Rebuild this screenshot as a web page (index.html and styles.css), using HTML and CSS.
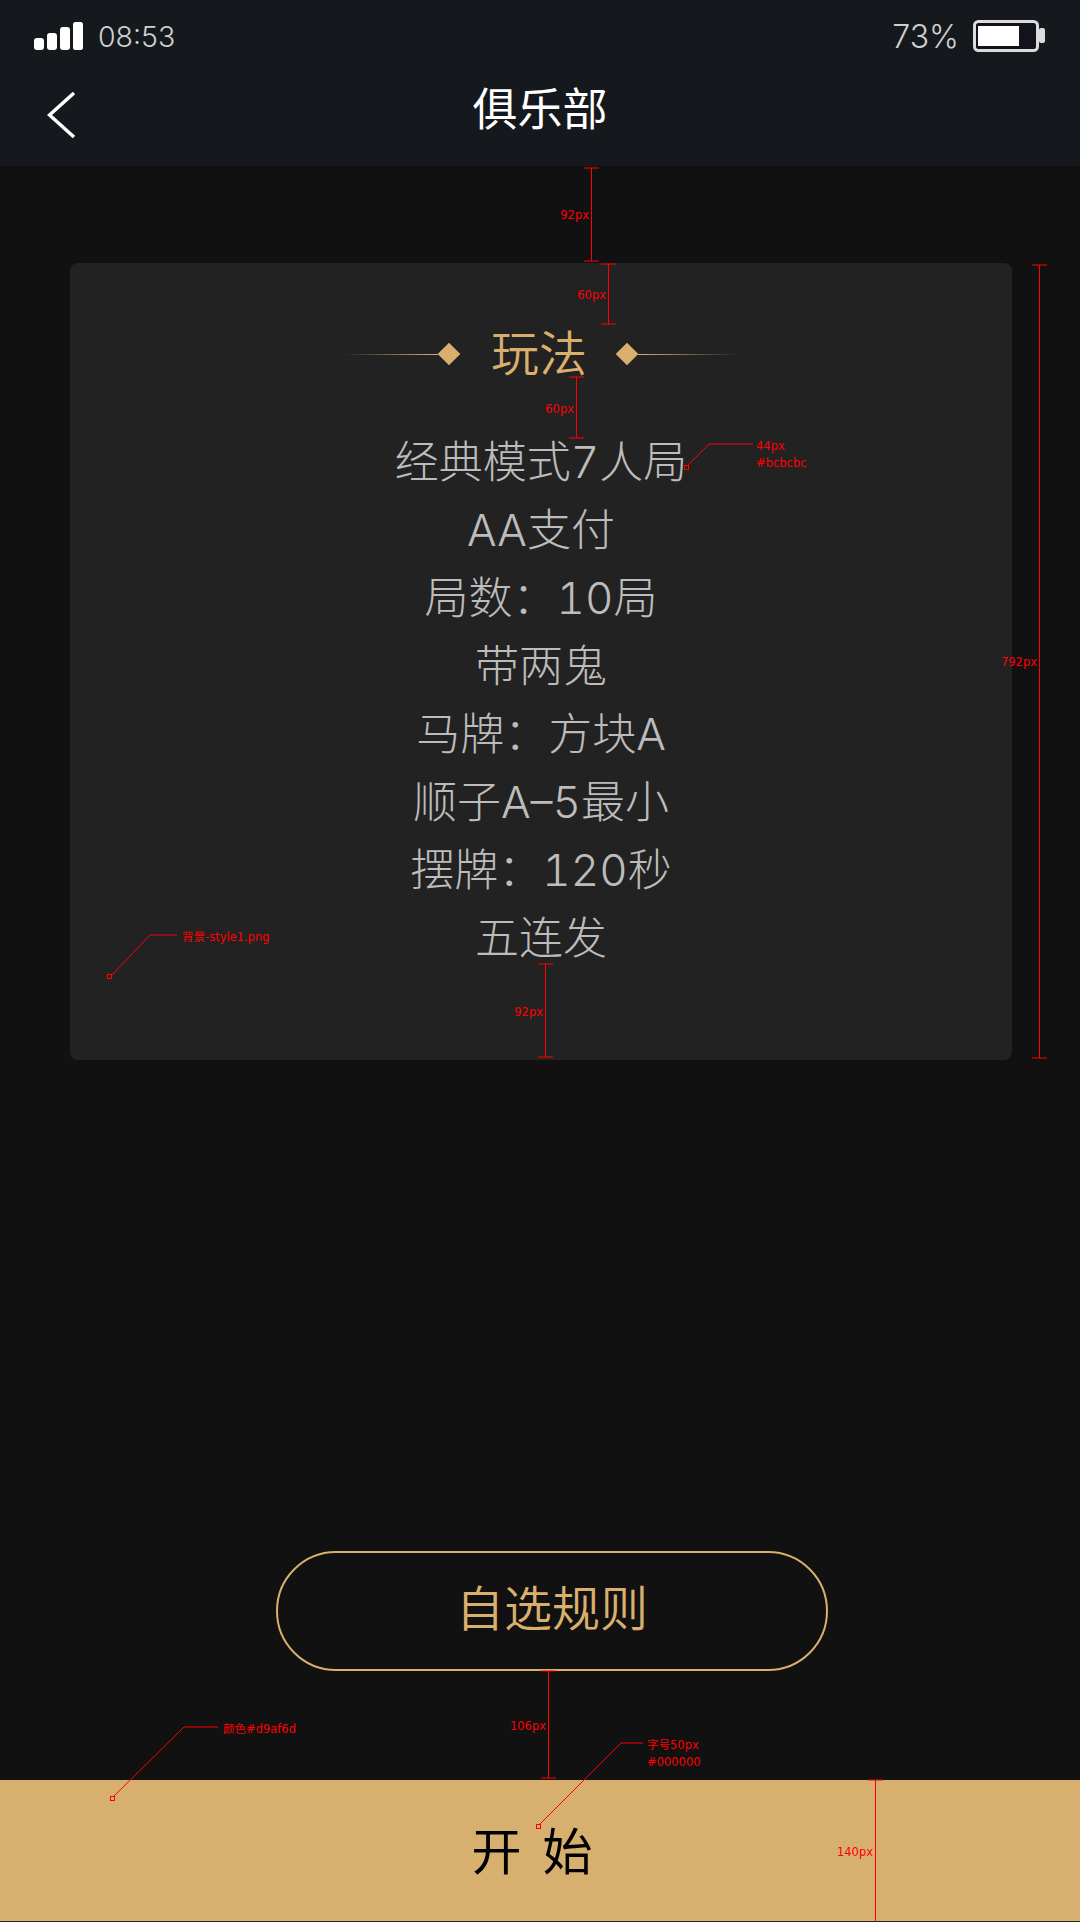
FILE: index.html
```html
<!DOCTYPE html>
<html lang="zh-CN">
<head>
  <meta charset="UTF-8" />
  <meta name="viewport" content="width=device-width, initial-scale=1" />
  <title>俱乐部</title>
  <link rel="stylesheet" href="styles.css">
</head>
<body>

  <header class="top">
    <div class="status">
      <svg class="signal" width="49" height="28" viewBox="0 0 49 28">
        <rect x="0" y="16" width="10" height="12" rx="3" />
        <rect x="13" y="11" width="10" height="17" rx="3" />
        <rect x="26" y="5" width="10" height="23" rx="3" />
        <rect x="39" y="0" width="10" height="28" rx="2.5" />
      </svg>
      <span class="clock">08:53</span>
      <span class="percent">73%</span>
      <svg class="battery" width="72" height="32" viewBox="0 0 72 32">
        <rect x="1.5" y="1.5" width="63" height="29" rx="4" class="battery-shell" />
        <rect x="5" y="6" width="41" height="20" class="battery-level" />
        <rect x="66" y="8" width="6" height="15" rx="2" class="battery-nub" />
      </svg>
    </div>
    <nav class="nav">
      <svg class="back" width="30" height="46" viewBox="0 0 30 46">
        <path d="M27 1 L2.5 23 L27 45" />
      </svg>
      <h1>俱乐部</h1>
    </nav>
  </header>

  <main class="content">
    <section class="card">
      <div class="ornament">
        <span class="rule rule-left"></span>
        <span class="diamond"></span>
        <h2>玩法</h2>
        <span class="diamond"></span>
        <span class="rule rule-right"></span>
      </div>
      <ul class="rules">
        <li>经典模式7人局</li>
        <li>AA支付</li>
        <li>局数：10局</li>
        <li>带两鬼</li>
        <li>马牌：方块A</li>
        <li>顺子A–5最小</li>
        <li>摆牌：120秒</li>
        <li>五连发</li>
      </ul>
    </section>

    <button class="custom" type="button">自选规则</button>
  </main>

  <button class="start" type="button">开 始</button>

  <!-- red spec marks drawn over the design -->
  <svg class="marks" width="1080" height="1922" viewBox="0 0 1080 1922">
    <g class="mark-lines">
      <path d="M591.5 168V261M584 168H599M584 261H599" />
      <path d="M608.5 264V324M601 264H616M601 324H616" />
      <path d="M576.5 377V438M569 377H584M569 438H584" />
      <path d="M545.5 964V1057M538 964H553M538 1057H553" />
      <path d="M1039.5 265V1058M1032 265H1047M1032 1058H1047" />
      <path d="M548.5 1671V1778M541 1671H556M541 1778H556" />
      <path d="M875.5 1780V1922M868 1780H883" />
      <path d="M688 465L709 444H753" />
      <path d="M112 975L150 935H177" />
      <path d="M114 1796L184 1727H218" />
      <path d="M540 1824L621 1743H643" />
      <rect x="684.5" y="465.5" width="4" height="4" />
      <rect x="107.5" y="974.5" width="4" height="4" />
      <rect x="110.5" y="1796.5" width="4" height="4" />
      <rect x="536.5" y="1824.5" width="4" height="4" />
    </g>
    <g class="mark-text">
      <text x="589" y="219" text-anchor="end">92px</text>
      <text x="606" y="299" text-anchor="end">60px</text>
      <text x="574" y="413" text-anchor="end">60px</text>
      <text x="756" y="450">44px</text>
      <text x="756" y="467">#bcbcbc</text>
      <text x="1037" y="666" text-anchor="end">792px</text>
      <text x="182" y="941">背景-style1.png</text>
      <text x="543" y="1016" text-anchor="end">92px</text>
      <text x="223" y="1733">颜色#d9af6d</text>
      <text x="546" y="1730" text-anchor="end">106px</text>
      <text x="647" y="1749">字号50px</text>
      <text x="647" y="1766">#000000</text>
      <text x="873" y="1856" text-anchor="end">140px</text>
    </g>
  </svg>

</body>
</html>
```

FILE: styles.css
```css
* {
  box-sizing: border-box;
}
body {
  position: relative;
  display: flex;
  flex-direction: column;
  width: 1080px;
  height: 1922px;
  margin: 0;
  overflow: hidden;
  background-color: #111112;
  font-family: Inter, "Noto Sans CJK SC", sans-serif;
  font-weight: 300;
}
.top {
  height: 166px;
  background-color: #15191d;
}
.status {
  display: flex;
  align-items: center;
  height: 72px;
  padding: 0 35px 0 34px;
  color: #cfcfcf;
}
.signal {
  fill: #fff;
}
.clock {
  margin-left: 15px;
  font-size: 28.5px;
}
.percent {
  margin-left: auto;
  margin-right: 14px;
  font-size: 32px;
}
.battery-shell {
  fill: #12121c;
  stroke: #dcdcdc;
  stroke-width: 3;
}
.battery-level {
  fill: #fff;
}
.battery-nub {
  fill: #dcdcdc;
}
.nav {
  position: relative;
  display: flex;
  justify-content: center;
  align-items: center;
  height: 72px;
  padding-top: 3px;
}
.nav h1 {
  margin: 0;
  font-size: 45px;
  font-weight: 400;
  line-height: 72px;
  color: #fff;
}
.back {
  position: absolute;
  left: 47px;
  top: 20px;
  fill: none;
  stroke: #fff;
  stroke-width: 3.5;
}
.content {
  flex: 1;
  display: flex;
  flex-direction: column;
  padding-top: 97px;
}
.card {
  width: 942px;
  margin-left: 70px;
  padding: 61px 0 88px;
  background-color: #222;
  border-radius: 8px;
}
.ornament {
  display: flex;
  justify-content: center;
  align-items: center;
  height: 60px;
}
.ornament h2 {
  margin: 0 29px 0 31px;
  font-size: 48px;
  font-weight: 350;
  line-height: 60px;
  color: #d9af6d;
}
.diamond {
  width: 16px;
  height: 16px;
  margin: 0 3px;
  background-color: #d9af6d;
  transform: rotate(45deg);
}
.rule {
  height: 1px;
}
.rule-left {
  width: 94px;
  background: linear-gradient(to right, rgba(217,175,109,0), #d9af6d);
}
.rule-right {
  width: 100px;
  background: linear-gradient(to left, rgba(217,175,109,0), #d9af6d);
}
.rules {
  margin: 44px 0 0;
  padding: 0;
  list-style: none;
  text-align: center;
  font-size: 44px;
  font-variant-numeric: tabular-nums;
  line-height: 68px;
  color: #bcbcbc;
}
.custom {
  width: 552px;
  height: 120px;
  margin: auto 0 109px 276px;
  padding: 0 0 12px;
  background: none;
  border: 2px solid #d9af6d;
  border-radius: 60px;
  font-family: inherit;
  font-size: 48px;
  font-weight: 350;
  color: #d9af6d;
}
.start {
  height: 142px;
  padding: 0 16px 6px 0;
  background-color: #d7b06f;
  border: none;
  border-bottom: 1px solid #222;
  font-family: inherit;
  font-size: 50px;
  font-weight: 400;
  word-spacing: 7px;
  color: #000;
}
.marks {
  position: absolute;
  left: 0;
  top: 0;
  pointer-events: none;
}
.mark-lines {
  fill: none;
  stroke: #f00;
  stroke-width: 1;
}
.mark-text {
  fill: #f00;
  font-family: "DejaVu Sans", "Noto Sans CJK SC", sans-serif;
  font-size: 11.5px;
  font-weight: 400;
}
```
